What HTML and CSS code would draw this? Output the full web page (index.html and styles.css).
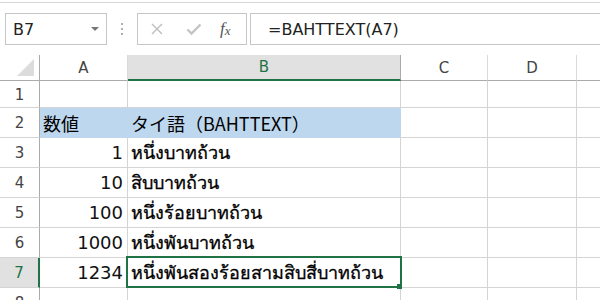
FILE: index.html
```html
<!DOCTYPE html>
<html>
<head>
<meta charset="utf-8">
<link rel="stylesheet" href="styles.css">
</head>
<body>
<div class="app">
  <div class="fbar">
    <div class="namebox">
      <span class="nb-text">B7</span>
      <svg class="nb-arrow" width="8" height="5" viewBox="0 0 8 5"><path d="M0 0H8L4 4Z" fill="#777"/></svg>
    </div>
    <div class="dots"><i></i><i></i><i></i></div>
    <div class="btnbox">
      <svg class="ic" width="14" height="14" viewBox="0 0 14 14"><path d="M2 2L12 12M12 2L2 12" stroke="#bdbdbd" stroke-width="1.4" fill="none"/></svg>
      <svg class="ic" width="16" height="14" viewBox="0 0 16 14"><path d="M1.5 7.5L5.5 11.5L14.5 2.5" stroke="#c4c4c4" stroke-width="2.4" fill="none"/></svg>
      <span class="fx">f<span class="fxx">x</span></span>
    </div>
    <div class="formula">=BAHTTEXT(A7)</div>
  </div>

  <div class="sheet">
    <div class="grid">
      <div class="corner"><svg width="18" height="17" viewBox="0 0 18 17"><path d="M17 0V17H0Z" fill="#dcdcdc"/></svg></div>
      <div class="ch">A</div>
      <div class="ch sel">B</div>
      <div class="ch">C</div>
      <div class="ch">D</div>
      <div class="ch last"></div>

      <div class="rh r1">1</div>
      <div class="c r1"></div><div class="c r1"></div><div class="c r1"></div><div class="c r1"></div><div class="c r1 last"></div>

      <div class="rh">2</div>
      <div class="c fill jp">数値</div><div class="c fill jp">タイ語（BAHTTEXT）</div><div class="c"></div><div class="c"></div><div class="c last"></div>

      <div class="rh">3</div>
      <div class="c num">1</div><div class="c th">หนึ่งบาทถ้วน</div><div class="c"></div><div class="c"></div><div class="c last"></div>

      <div class="rh">4</div>
      <div class="c num">10</div><div class="c th">สิบบาทถ้วน</div><div class="c"></div><div class="c"></div><div class="c last"></div>

      <div class="rh">5</div>
      <div class="c num">100</div><div class="c th">หนึ่งร้อยบาทถ้วน</div><div class="c"></div><div class="c"></div><div class="c last"></div>

      <div class="rh">6</div>
      <div class="c num">1000</div><div class="c th">หนึ่งพันบาทถ้วน</div><div class="c"></div><div class="c"></div><div class="c last"></div>

      <div class="rh sel">7</div>
      <div class="c num">1234</div><div class="c th">หนึ่งพันสองร้อยสามสิบสี่บาทถ้วน</div><div class="c"></div><div class="c"></div><div class="c last"></div>

      <div class="rh r8">8</div>
      <div class="c"></div><div class="c"></div><div class="c"></div><div class="c"></div><div class="c last"></div>
    </div>
    <div class="selbox"></div>
    <div class="handle"></div>
  </div>
</div>
</body>
</html>
```

FILE: styles.css
```css
* { box-sizing: border-box; }
html, body { margin: 0; padding: 0; background: #fff; }
body { font-family: "DejaVu Sans", sans-serif; color: #222; width: 600px; height: 300px; overflow: hidden; }

.app { width: 600px; height: 300px; overflow: hidden; }

.fbar {
  margin-top: 2px;
  border-top: 1px solid #d6d6d6;
  padding: 10px 0 0 5px;
  height: 53px;
  display: flex;
  align-items: flex-start;
}
.namebox {
  width: 102px; height: 32px;
  border: 1px solid #c6c6c6;
  display: flex; align-items: center; justify-content: space-between;
  padding: 0 7px 0 7px;
  font-size: 16px; color: #222;
}
.nb-arrow { margin-top: 1px; }
.dots {
  width: 30px; height: 32px;
  display: flex; flex-direction: column; align-items: center; justify-content: center; gap: 3px;
}
.dots i { display: block; width: 2px; height: 2px; background: #b0b0b0; }
.btnbox {
  width: 110px; height: 32px;
  border: 1px solid #c6c6c6;
  display: flex; align-items: center;
  padding-left: 12px; gap: 22px;
}
.fx { font-family: "Liberation Serif", serif; font-style: italic; font-size: 17px; color: #555; margin-left: -4px; }
.fxx { font-size: 13px; position: relative; top: 1px; }
.formula {
  margin-left: 3px;
  flex: 1;
  height: 32px;
  border: 1px solid #c6c6c6;
  border-right: none;
  padding-left: 17px;
  display: flex; align-items: center;
  font-size: 16px; color: #222;
}

.sheet { position: relative; }
.grid {
  display: grid;
  grid-template-columns: 40px 88px 273px 87px 89px 23px;
  grid-template-rows: 26px 27px repeat(6, 30px) 20px;
}
.corner {
  border-right: 1px solid #ababab; border-bottom: 1px solid #ababab;
  display: flex; align-items: flex-end; justify-content: flex-end;
  padding: 0 4px 4px 0;
}
.ch {
  border-right: 1px solid #dadada; border-bottom: 1px solid #ababab;
  display: flex; align-items: center; justify-content: center;
  font-size: 15px; color: #444;
}
.ch.sel { background: #e1e1e1; color: #217346; border-bottom: 2px solid #217346; border-right-color: #ababab; }
.ch.last, .c.last { border-right: none; }
.rh {
  border-right: 1px solid #ababab; border-bottom: 1px solid #d4d4d4;
  display: flex; align-items: center; justify-content: center;
  font-size: 15px; color: #444;
  padding-top: 1px;
}
.rh.r8 { align-items: flex-start; padding-top: 6px; }
.rh.sel { background: #e1e1e1; color: #217346; border-right: 2px solid #217346; }
.c {
  border-right: 1px solid #d4d4d4; border-bottom: 1px solid #d4d4d4;
  display: flex; align-items: center;
  font-size: 18px; color: #111;
  white-space: nowrap;
}
.c.fill { background: #bdd7ee; border-right-color: #bdd7ee; border-bottom-color: #bdd7ee; }
.c.jp { font-family: "Noto Sans CJK JP", sans-serif; padding-left: 3px; font-size: 18px; color: #000; }
.c.num { justify-content: flex-end; padding-right: 4px; }
.c.th { padding-left: 3px; overflow: visible; color: #000; -webkit-text-stroke: 0.3px #000; font-size: 18px; }

.selbox {
  position: absolute; left: 126px; top: 201px;
  width: 276px; height: 32px;
  border: 2px solid #217346;
  pointer-events: none;
}
.handle {
  position: absolute; left: 397px; top: 229px;
  width: 5px; height: 5px; background: #217346;
}
```
